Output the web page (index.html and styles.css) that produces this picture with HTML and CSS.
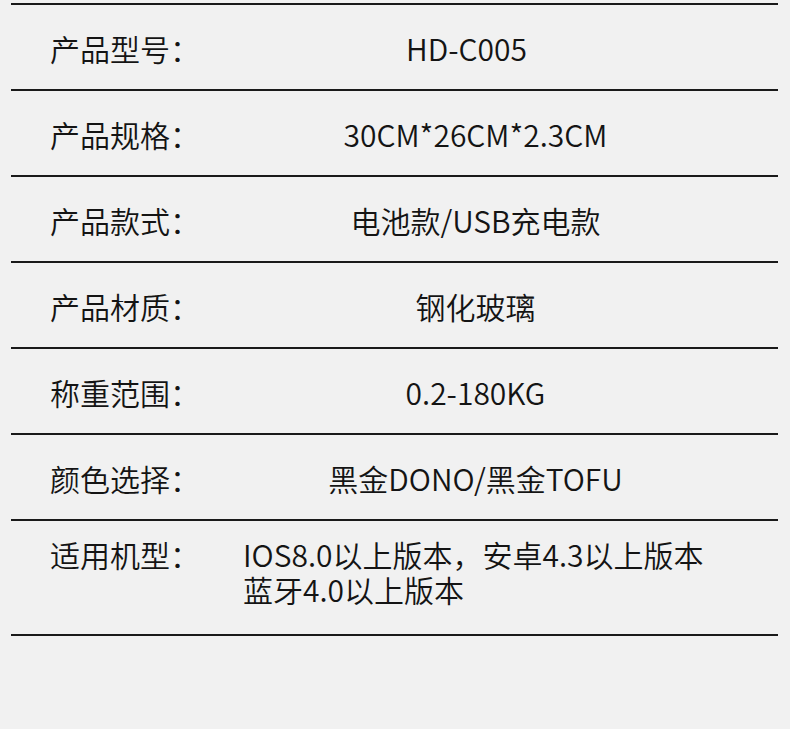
FILE: index.html
```html
<!DOCTYPE html>
<html lang="zh-CN">
<head>
<meta charset="utf-8">
<title>产品参数</title>
<link rel="stylesheet" href="styles.css">
</head>
<body>
<div class="spec">
  <div class="row"><div class="label">产品型号：</div><div class="value value-shift">HD-C005</div></div>
  <div class="row"><div class="label">产品规格：</div><div class="value">30CM*26CM*2.3CM</div></div>
  <div class="row"><div class="label">产品款式：</div><div class="value">电池款/USB充电款</div></div>
  <div class="row"><div class="label">产品材质：</div><div class="value">钢化玻璃</div></div>
  <div class="row"><div class="label">称重范围：</div><div class="value">0.2-180KG</div></div>
  <div class="row"><div class="label">颜色选择：</div><div class="value">黑金DONO/黑金TOFU</div></div>
  <div class="row row-multi"><div class="label">适用机型：</div><div class="value value-left">IOS8.0以上版本，安卓4.3以上版本<br>蓝牙4.0以上版本</div></div>
</div>
</body>
</html>
```
FILE: styles.css
```css
*, *::before, *::after {
  box-sizing: border-box;
}
html, body {
  margin: 0;
  padding: 0;
  background: #f1f1f1;
}
body {
  font-family: "Noto Sans CJK SC", "Noto Sans", sans-serif;
  font-weight: 350;
  color: #141414;
  height: 729px;
  overflow: hidden;
}
.spec {
  margin: 3px 12px 0 11px;
  border-top: 2px solid #1a1a1a;
}
.row {
  display: flex;
  align-items: center;
  height: 86px;
  border-bottom: 2px solid #1a1a1a;
  padding: 2px 0 0 39px;
  font-size: 30px;
  line-height: 37px;
}
.label {
  width: 193px;
  flex: none;
}
.value {
  width: 465px;
  flex: none;
  text-align: center;
}
.value-shift {
  padding-right: 18px;
}
.row-multi {
  height: auto;
  align-items: flex-start;
  padding: 16px 0 27px 39px;
  line-height: 35px;
}
.value-left {
  text-align: left;
}
```
